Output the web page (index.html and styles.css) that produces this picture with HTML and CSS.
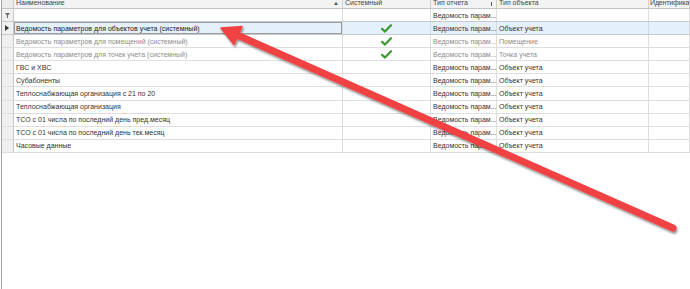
FILE: index.html
```html
<!DOCTYPE html>
<html lang="ru">
<head>
<meta charset="utf-8">
<title>Отчеты</title>
<link rel="stylesheet" href="styles.css">
</head>
<body>
<div class="page">
  <div class="grid">
    <div class="row header">
      <div class="cell ind"></div>
      <div class="cell name">Наименование<span class="sort">▲</span></div>
      <div class="cell hsys">Системный</div>
      <div class="cell rep">Тип отчета<span class="pin"></span></div>
      <div class="cell obj">Тип объекта</div>
      <div class="cell ident">Идентифика</div>
    </div>
    <div class="row filter">
      <div class="cell ind"><svg class="funnel" width="5" height="5" viewBox="0 0 5 5"><path d="M0 0H5L3 2.5V5H2V2.5Z" fill="#6a6a6a"/></svg></div>
      <div class="cell name"></div>
      <div class="cell sys"></div>
      <div class="cell rep">Ведомость парам...</div>
      <div class="cell obj"></div>
      <div class="cell ident"></div>
    </div>
    <div class="row data selected">
      <div class="cell ind"><svg width="4" height="6" viewBox="0 0 4 6"><path d="M0 0L4 3L0 6Z" fill="#333"/></svg></div>
      <div class="cell name focus">Ведомость параметров для объектов учета (системный)</div>
      <div class="cell sys"><svg class="check" width="11" height="9" viewBox="0 0 11 9"><path d="M1 4.8L4 7.6L10 1.2" fill="none" stroke="#3c9b2e" stroke-width="2.2" stroke-linecap="round" stroke-linejoin="round"/></svg></div>
      <div class="cell rep">Ведомость парам...</div>
      <div class="cell obj">Объект учета</div>
      <div class="cell ident"></div>
    </div>
    <div class="row data dim">
      <div class="cell ind"></div>
      <div class="cell name">Ведомость параметров для помещений (системный)</div>
      <div class="cell sys"><svg class="check" width="11" height="9" viewBox="0 0 11 9"><path d="M1 4.8L4 7.6L10 1.2" fill="none" stroke="#3c9b2e" stroke-width="2.2" stroke-linecap="round" stroke-linejoin="round"/></svg></div>
      <div class="cell rep">Ведомость парам...</div>
      <div class="cell obj">Помещение</div>
      <div class="cell ident"></div>
    </div>
    <div class="row data dim">
      <div class="cell ind"></div>
      <div class="cell name">Ведомость параметров для точек учета (системный)</div>
      <div class="cell sys"><svg class="check" width="11" height="9" viewBox="0 0 11 9"><path d="M1 4.8L4 7.6L10 1.2" fill="none" stroke="#3c9b2e" stroke-width="2.2" stroke-linecap="round" stroke-linejoin="round"/></svg></div>
      <div class="cell rep">Ведомость парам...</div>
      <div class="cell obj">Точка учета</div>
      <div class="cell ident"></div>
    </div>
    <div class="row data">
      <div class="cell ind"></div>
      <div class="cell name">ГВС и ХВС</div>
      <div class="cell sys"></div>
      <div class="cell rep">Ведомость парам...</div>
      <div class="cell obj">Объект учета</div>
      <div class="cell ident"></div>
    </div>
    <div class="row data">
      <div class="cell ind"></div>
      <div class="cell name">Субабоненты</div>
      <div class="cell sys"></div>
      <div class="cell rep">Ведомость парам...</div>
      <div class="cell obj">Объект учета</div>
      <div class="cell ident"></div>
    </div>
    <div class="row data">
      <div class="cell ind"></div>
      <div class="cell name">Теплоснабжающая организация с 21 по 20</div>
      <div class="cell sys"></div>
      <div class="cell rep">Ведомость парам...</div>
      <div class="cell obj">Объект учета</div>
      <div class="cell ident"></div>
    </div>
    <div class="row data">
      <div class="cell ind"></div>
      <div class="cell name">Теплоснабжающая организация</div>
      <div class="cell sys"></div>
      <div class="cell rep">Ведомость парам...</div>
      <div class="cell obj">Объект учета</div>
      <div class="cell ident"></div>
    </div>
    <div class="row data">
      <div class="cell ind"></div>
      <div class="cell name">ТСО с 01 числа по последний день пред.месяц</div>
      <div class="cell sys"></div>
      <div class="cell rep">Ведомость парам...</div>
      <div class="cell obj">Объект учета</div>
      <div class="cell ident"></div>
    </div>
    <div class="row data">
      <div class="cell ind"></div>
      <div class="cell name">ТСО с 01 числа по последний день тек.месяц</div>
      <div class="cell sys"></div>
      <div class="cell rep">Ведомость парам...</div>
      <div class="cell obj">Объект учета</div>
      <div class="cell ident"></div>
    </div>
    <div class="row data">
      <div class="cell ind"></div>
      <div class="cell name">Часовые данные</div>
      <div class="cell sys"></div>
      <div class="cell rep">Ведомость парам...</div>
      <div class="cell obj">Объект учета</div>
      <div class="cell ident"></div>
    </div>
  </div>

  <svg class="arrow" width="690" height="289" viewBox="0 0 690 289">
    <defs>
      <filter id="sh" x="-10%" y="-10%" width="120%" height="130%">
        <feDropShadow dx="1" dy="2" stdDeviation="1.2" flood-color="#000" flood-opacity="0.45"/>
      </filter>
    </defs>
    <g filter="url(#sh)">
      <line x1="673" y1="228" x2="236" y2="34.5" stroke="#f04343" stroke-width="7" stroke-linecap="round"/>
      <path d="M221 28L242 26.5L234 44.5Z" fill="#f04343" stroke="#f04343" stroke-width="1.5" stroke-linejoin="round"/>
    </g>
  </svg>
</div>
</body>
</html>
```

FILE: styles.css
```css
* { box-sizing: border-box; }

html, body {
  margin: 0;
  padding: 0;
  background: #fff;
}

body {
  font-family: "Liberation Sans", Arial, sans-serif;
  font-size: 7px;
  color: #333;
}

.page {
  position: relative;
  width: 690px;
  height: 289px;
  overflow: hidden;
  padding-left: 1px;
}

.grid {
  height: 289px;
  border-left: 1px solid #a3a3a3;
  overflow: hidden;
}

.row {
  display: grid;
  grid-template-columns: 12px 329px 88px 66px 152px 1fr;
  height: 13px;
  border-bottom: 1px solid #dedede;
}

.data { height: 13.1px; }

.cell {
  border-right: 1px solid #dedede;
  padding-left: 2px;
  display: flex;
  align-items: center;
  white-space: nowrap;
  overflow: hidden;
}

.ind {
  background: #f0f0f0;
  border-right: 1px solid #c9c9c9;
  padding-left: 3px;
}

.header {
  height: 9px;
  background: #f3f3f3;
  border-bottom: 1px solid #c4c4c4;
}

.header .cell {
  align-items: flex-end;
  line-height: 7px;
  padding-bottom: 2px;
  border-right: 1px solid #cfcfcf;
  color: #444;
  position: relative;
}

.header .ind { background: #ececec; }

.header .ident {
  padding-left: 1px;
  letter-spacing: -0.15px;
}

.sort {
  position: absolute;
  right: 3px;
  bottom: 1px;
  font-size: 6px;
  color: #555;
}

.pin {
  position: absolute;
  right: 4px;
  bottom: 2px;
  width: 1px;
  height: 4px;
  background: #555;
}

.filter .cell { background: #fff; }
.filter .ind { background: #f0f0f0; }

.selected {
  background: #e4f0fb;
  border-bottom: 1px solid #c8c8c8;
  box-shadow: 0 -1px 0 #c8c8c8;
}

.selected .cell { border-right-color: #d2dbe4; }

.selected .ind { background: #f0f0f0; border-right-color: #c9c9c9; }

.focus {
  box-shadow: inset 0 0 0 1px #9c9c9c;
  color: #222;
}

.dim .name, .dim .rep, .dim .obj { color: #8c8c8c; }

.sys { justify-content: center; padding-left: 0; }

.arrow {
  position: absolute;
  left: 0;
  top: 0;
  pointer-events: none;
}
```
